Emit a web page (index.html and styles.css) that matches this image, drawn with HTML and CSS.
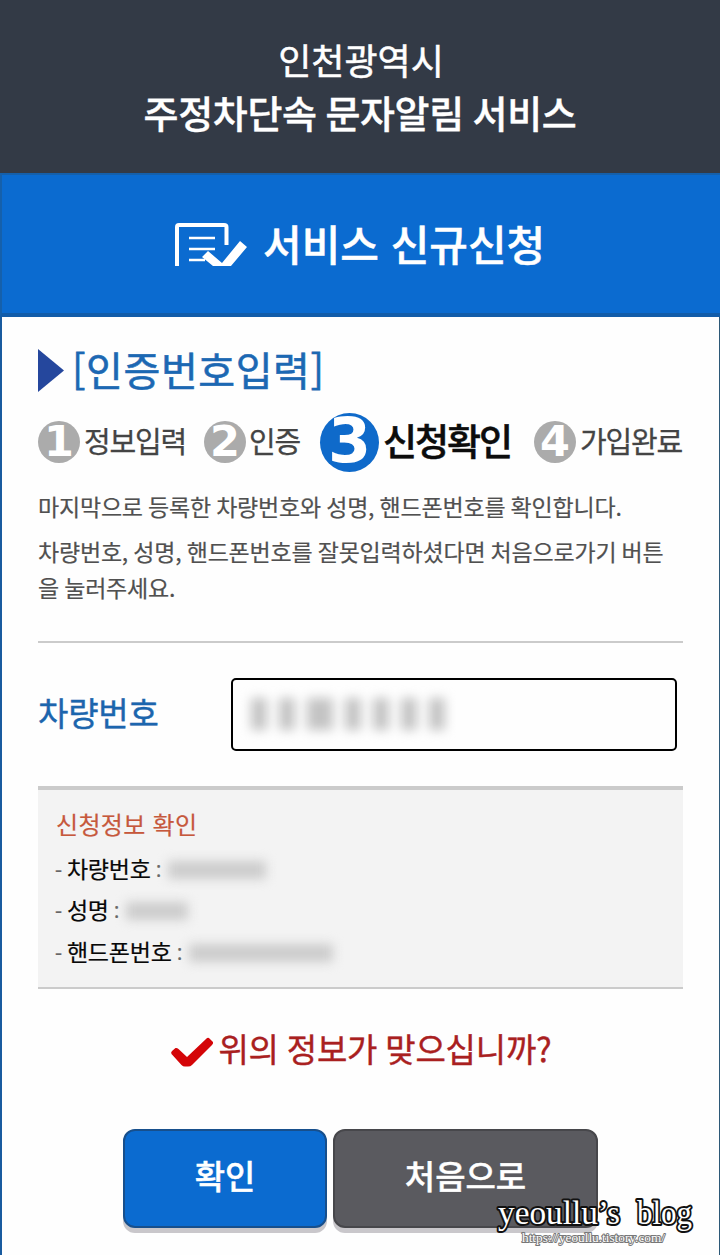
FILE: index.html
```html
<!DOCTYPE html>
<html lang="ko">
<head>
<meta charset="utf-8">
<title>주정차단속 문자알림 서비스</title>
<link rel="stylesheet" href="styles.css">
</head>
<body>
<header class="site-header">
  <div class="city">인천광역시</div>
  <h1 class="site-name">주정차단속 문자알림 서비스</h1>
</header>
<main class="frame">
  <div class="banner">
    <svg class="form-icon" width="74" height="44" viewBox="0 0 74 44">
      <path d="M2 44V5Q2 3 4 3H49Q51.500 3 51.500 5V23" fill="none" stroke="#fff" stroke-width="4"/>
      <path d="M14 16H40M14 27H40M14 38H30" stroke="#fff" stroke-width="2.4"/>
      <path d="M27 35L33 29L47 41L65 19L72 25L56 44H38Z" fill="#fff"/>
    </svg>
    <h2 class="banner-title">서비스 신규신청</h2>
  </div>
  <div class="content">
    <div class="section-title">
      <svg width="26" height="43" viewBox="0 0 26 43"><path d="M0 0L26 21.5L0 43Z" fill="#25479d"/></svg>
      <span class="section-text">[인증번호입력]</span>
    </div>
    <ol class="steps">
      <li class="step step-1"><span class="num">1</span><span class="name">정보입력</span></li>
      <li class="step step-2"><span class="num">2</span><span class="name">인증</span></li>
      <li class="step step-3 current"><span class="num">3</span><span class="name">신청확인</span></li>
      <li class="step step-4"><span class="num">4</span><span class="name">가입완료</span></li>
    </ol>
    <p class="guide">마지막으로 등록한 차량번호와 성명, 핸드폰번호를 확인합니다.</p>
    <p class="guide">차량번호, 성명, 핸드폰번호를 잘못입력하셨다면 처음으로가기 버튼<br>을 눌러주세요.</p>
    <div class="field">
      <span class="field-label">차량번호</span>
      <div class="field-box">
        <div class="mask mask-field"><i></i><i></i><i class="wide"></i><i></i><i></i><i></i><i></i></div>
      </div>
    </div>
    <section class="info">
      <h3 class="info-title">신청정보 확인</h3>
      <div class="info-row"><span class="dim">-</span> 차량번호 <span class="dim">:</span><span class="mask mask-plate"></span></div>
      <div class="info-row"><span class="dim">-</span> 성명 <span class="dim">:</span><span class="mask mask-name"></span></div>
      <div class="info-row"><span class="dim">-</span> 핸드폰번호 <span class="dim">:</span><span class="mask mask-phone"></span></div>
    </section>
    <div class="question">
      <svg width="44" height="30" viewBox="0 0 44 30"><path d="M2 14L5.500 11Q7 10.500 8.500 12L17 20L36 2Q38 0 39.500 1.500L43 5Q43.500 6.500 42 8L22 28Q20.500 29.500 18 29.500H15Q13 29.500 11.500 28L1.500 17Q0.500 15.500 2 14Z" fill="#d40508"/></svg>
      <span class="question-text">위의 정보가 맞으십니까?</span>
    </div>
    <div class="actions">
      <button class="btn btn-ok">확인</button>
      <button class="btn btn-home">처음으로</button>
    </div>
  </div>
</main>
<svg class="watermark" width="210" height="60" viewBox="0 0 210 60">
  <text class="wm-name" x="8" y="31" textLength="122" lengthAdjust="spacingAndGlyphs">yeoullu’s</text>
  <text class="wm-name" x="147" y="31" textLength="55" lengthAdjust="spacingAndGlyphs">blog</text>
  <text class="wm-url" x="32" y="49" textLength="143" lengthAdjust="spacingAndGlyphs">https://yeoullu.tistory.com/</text>
</svg>
</body>
</html>
```
FILE: styles.css
```css
* { box-sizing: border-box; }
body {
  margin: 0;
  height: 1255px;
  overflow: hidden;
  position: relative;
  display: flex;
  flex-direction: column;
  background: #fefefe;
  font-family: "Noto Sans CJK KR", sans-serif;
}
h1, h2, h3, p, ol { margin: 0; padding: 0; }
.site-header {
  height: 173px;
  padding-top: 33px;
  background: #333a46;
  color: #fff;
  text-align: center;
  white-space: nowrap;
}
.city { font-size: 36px; line-height: 53px; padding-left: 2px; -webkit-text-stroke: 0.5px; }
.site-name { font-size: 38px; line-height: 52px; font-weight: 500; letter-spacing: -0.35px; word-spacing: -1.5px; -webkit-text-stroke: 0.4px; }
.frame {
  flex: 1;
  border-left: 2px solid #195b9f;
  border-right: 1px solid #2c5877;
}
.banner {
  height: 144px;
  margin: 0 -1px 0 -2px;
  border-top: 2px solid #1560ab;
  border-bottom: 4px solid #125ca9;
  border-left: 2px solid #1560ab;
  background: #0b6bd0;
  display: flex;
  align-items: center;
  padding-left: 173px;
  gap: 14px;
  color: #fff;
}
.form-icon { flex: none; }
.banner-title {
  font-size: 42px;
  line-height: 60px;
  font-weight: 500;
  white-space: nowrap;
  padding-bottom: 3px;
  -webkit-text-stroke: 0.5px;
}
.content { padding: 0 36px; }
.section-title {
  display: flex;
  align-items: center;
  gap: 8px;
  height: 60px;
  margin-top: 23px;
  color: #1c68b3;
}
.section-text {
  font-size: 40px;
  line-height: 56px;
  letter-spacing: 0.6px;
  padding-bottom: 3px;
  white-space: nowrap;
  -webkit-text-stroke: 0.6px;
}
.steps {
  list-style: none;
  display: flex;
  height: 60px;
  margin-top: 12px;
}
.step { display: flex; align-items: center; flex: none; white-space: nowrap; color: #444; }
.step-1 { width: 166px; }
.step-2 { width: 116px; }
.step-3 { width: 214px; }
.num {
  width: 42px;
  height: 42px;
  margin-right: 4px;
  border-radius: 50%;
  background: #ababab;
  color: #fff;
  font: bold 43px/40px "DejaVu Sans", sans-serif;
  text-align: center;
}
.name { font-size: 29px; line-height: 42px; letter-spacing: -1.2px; padding-bottom: 4px; -webkit-text-stroke: 0.3px; }
.step-2 .name { margin-left: -1px; }
.current { color: #0c0c0c; }
.current .num { width: 59px; height: 59px; font-size: 62px; line-height: 56px; background: #0f6aca; }
.current .name { font-size: 37px; font-weight: 500; letter-spacing: -2px; padding-bottom: 5px; -webkit-text-stroke: 0.5px; }
.guide {
  color: #505050;
  font-size: 23px;
  line-height: 36px;
  letter-spacing: -0.2px;
  word-spacing: -1px;
  margin-top: 16px;
  white-space: nowrap;
  -webkit-text-stroke: 0.2px;
}
.guide + .guide { margin-top: 9px; }
.field {
  display: flex;
  align-items: center;
  justify-content: space-between;
  height: 146px;
  margin-top: 36px;
  padding-right: 6px;
  border-top: 2px solid #cbcbcb;
}
.field-label {
  color: #1c65ad;
  font-size: 33px;
  line-height: 48px;
  letter-spacing: -0.2px;
  padding-bottom: 7px;
  -webkit-text-stroke: 0.4px;
}
.field-box {
  width: 446px;
  height: 73px;
  margin-bottom: 2px;
  border: 2px solid #000;
  border-radius: 5px;
  padding: 18px 18px;
}
.mask-field { display: flex; gap: 12px; filter: blur(5.500px); }
.mask-field i { width: 16px; height: 32px; background: #c4c4c4; }
.mask-field .wide { width: 26px; }
.info {
  height: 203px;
  margin-top: -1px;
  padding: 16px 17px 0;
  border-top: 4px solid #cbcbcb;
  border-bottom: 2px solid #cbcbcb;
  background: #f3f3f3;
}
.info-title { font-size: 24px; line-height: 36px; font-weight: 400; letter-spacing: 0.3px; padding-left: 1px; color: #c6583c; -webkit-text-stroke: 0.2px; }
.info-row {
  display: flex;
  align-items: center;
  gap: 5px;
  height: 41.500px;
  font-size: 23px;
  letter-spacing: -0.2px;
  color: #080808;
  -webkit-text-stroke: 0.2px;
}
.info-title + .info-row { margin-top: 5px; }
.dim { color: #666; font-family: "Open Sans", sans-serif; font-size: 22px; }
.info-row .mask { height: 18px; margin: 4px 0 0 2px; background: #ccc; filter: blur(5.500px); }
.mask-plate { width: 98px; }
.mask-name { width: 62px; }
.mask-phone { width: 144px; }
.question {
  display: flex;
  align-items: center;
  justify-content: center;
  gap: 4px;
  height: 52px;
  margin-top: 33px;
  padding-left: 1px;
  color: #a9201f;
  font-size: 33px;
  white-space: nowrap;
}
.question-text { letter-spacing: -0.2px; word-spacing: -1px; padding-bottom: 1px; -webkit-text-stroke: 0.4px; }
.question svg { margin-top: 8px; }
.actions { display: flex; gap: 6px; margin: 55px 0 0 85px; }
.btn {
  height: 99px;
  padding: 0 0 7px;
  border-radius: 12px;
  border: 2px solid;
  color: #fff;
  font: 500 33px/48px "Noto Sans CJK KR", sans-serif;
  -webkit-text-stroke: 0.4px;
  box-shadow: 0 5px 0 #c9c7cb;
}
.btn-ok { width: 204px; background: #0b6bd0; border-color: #174f8c; }
.btn-home { width: 265px; background: #5a5a5f; border-color: #47474b; }
.watermark { position: absolute; left: 490px; top: 1193px; }
.wm-name {
  font: 34px "Liberation Serif", serif;
  fill: #fff;
  stroke: #111;
  stroke-width: 4px;
  stroke-linejoin: round;
  paint-order: stroke;
}
.wm-url {
  font: 13px "Liberation Serif", serif;
  fill: #fff;
  stroke: #777;
  stroke-width: 2px;
  stroke-linejoin: round;
  paint-order: stroke;
}
```
